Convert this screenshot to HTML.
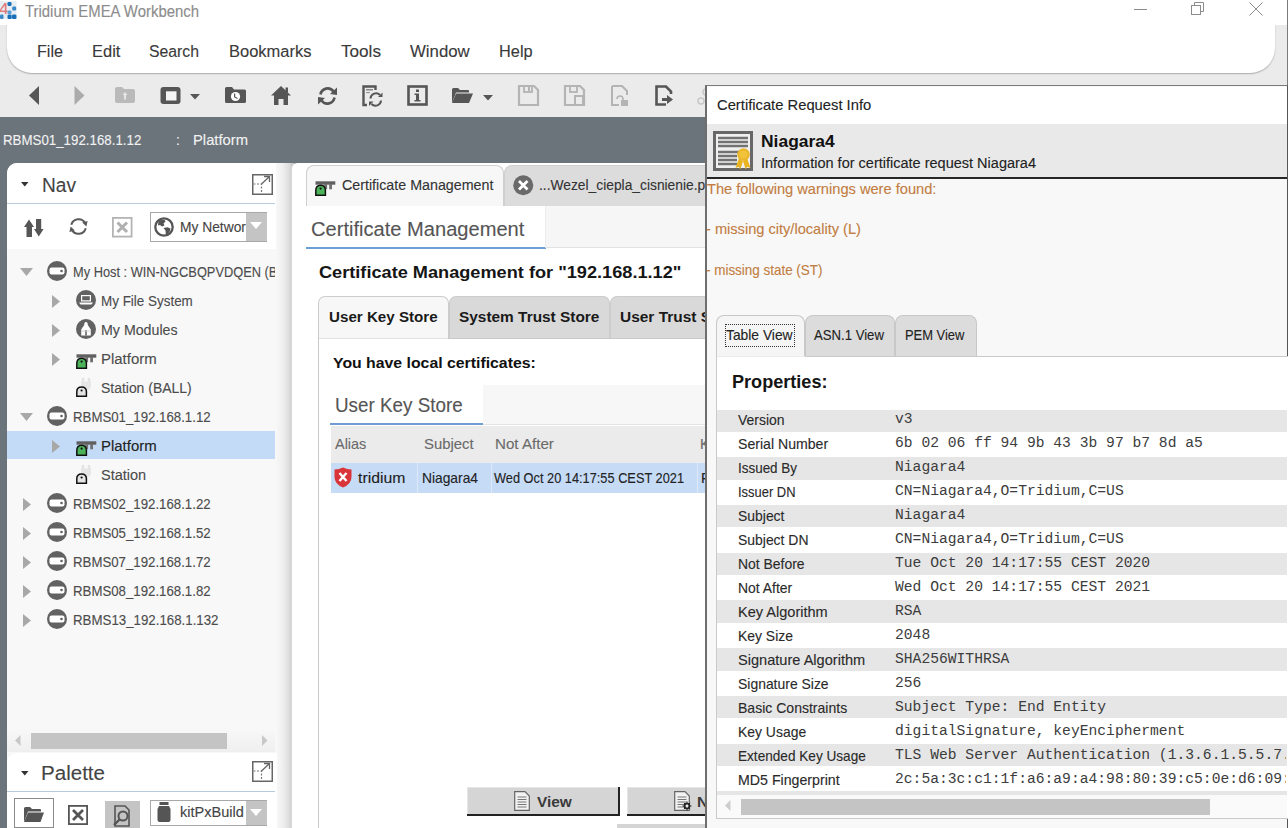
<!DOCTYPE html>
<html><head><meta charset="utf-8"><title>Tridium EMEA Workbench</title>
<style>
*{margin:0;padding:0;box-sizing:border-box}
html,body{width:1288px;height:828px;overflow:hidden}
body{position:relative;background:#6b737b;font-family:"Liberation Sans",sans-serif}
.a{position:absolute}
.tx{position:absolute;white-space:nowrap;line-height:1}
svg{position:absolute;overflow:visible}
</style></head><body>
<div class="a" style="left:0px;top:0px;width:1288px;height:117px;background:#ebebeb"></div>
<div class="a" style="left:7px;top:20px;width:1268px;height:53px;background:#fff;border-radius:0 0 25px 25px;box-shadow:0 1px 1.5px rgba(0,0,0,.28)"></div>
<div class="a" style="left:0px;top:0px;width:1288px;height:25px;background:#fff"></div>
<svg style="left:0px;top:1px" width="17" height="18" viewBox="0 0 17 18">
<rect x="0" y="0" width="16.5" height="18" fill="#e6eef4"/>
<path d="M-1 10 L4.5 2 L6.5 2 L6.5 9.5 L7.5 9.5 L7.5 11 L6.5 11 L6.5 13 L4.8 13 L4.8 11 L-1 11 Z M0.8 9.5 L4.8 9.5 L4.8 4.5 Z" fill="#e07c7c"/>
<rect x="7.5" y="1" width="4" height="4" rx="1.2" fill="#1a70b8"/>
<rect x="12.2" y="5.5" width="4" height="4" rx="1.2" fill="#3a88c8"/>
<rect x="7.5" y="9.5" width="4" height="3.5" rx="1.2" fill="#5a9ed6"/>
<rect x="7.5" y="13.5" width="4.2" height="4.5" rx="1.2" fill="#1a70b8"/>
<rect x="12" y="13.5" width="4.5" height="4.5" rx="1.2" fill="#1a70b8"/>
<rect x="0" y="13.5" width="3.5" height="4.5" rx="1.2" fill="#3a88c8"/>
</svg>
<div class="a" style="left:1134px;top:9px;width:13px;height:1px;background:#8a8a8a"></div>
<svg style="left:1190px;top:1px" width="16" height="16" viewBox="0 0 16 16"><rect x="1.5" y="4.5" width="9" height="9" fill="none" stroke="#8c8c8c" stroke-width="1"/><path d="M4.5 4.5 V1.5 H13.5 V10.5 H10.5" fill="none" stroke="#8c8c8c" stroke-width="1"/></svg>
<svg style="left:1248px;top:1px" width="16" height="16" viewBox="0 0 16 16"><path d="M1.5 1.5 L14.5 14.5 M14.5 1.5 L1.5 14.5" stroke="#8c8c8c" stroke-width="1"/></svg>
<svg style="left:29px;top:86px" width="11" height="19" viewBox="0 0 11 19"><path d="M10 0 L0 9.5 L10 19 Z" fill="#565656"/></svg>
<svg style="left:74px;top:86px" width="11" height="19" viewBox="0 0 11 19"><path d="M0.5 0 L10.5 9.5 L0.5 19 Z" fill="#ababab"/></svg>
<svg style="left:115px;top:87px" width="20" height="16" viewBox="0 0 20 16"><path d="M0 2 Q0 0 2 0 H7 L9 2 H18 Q20 2 20 4 V14 Q20 16 18 16 H2 Q0 16 0 14 Z" fill="#bababa"/><path d="M10 5 L7.5 8 H9 V12.5 H11 V8 H12.5 Z" fill="#e6e6e6"/></svg>
<svg style="left:160px;top:87px" width="21" height="17" viewBox="0 0 21 17"><rect x="0.5" y="0" width="20" height="17" rx="3" fill="#565656"/><rect x="6" y="4.3" width="10.5" height="9.2" fill="#f4f4f4"/></svg>
<svg style="left:190px;top:94px" width="10" height="6" viewBox="0 0 10 6"><path d="M0 0 H10 L5 5.5 Z" fill="#565656"/></svg>
<svg style="left:225px;top:87px" width="21" height="16" viewBox="0 0 21 16"><path d="M0 1.5 Q0 0 1.5 0 H7 L9 2.5 H19.5 Q21 2.5 21 4 V14.5 Q21 16 19.5 16 H1.5 Q0 16 0 14.5 Z" fill="#565656"/><circle cx="10.5" cy="9.5" r="4.6" fill="#fff"/><path d="M9.6 6.5 V10 L12.5 11.5" stroke="#565656" stroke-width="1.2" fill="none"/></svg>
<svg style="left:271px;top:86px" width="20" height="19" viewBox="0 0 20 19"><path d="M10 0 L20 9.5 H17 V19 H12.5 V13 H7.5 V19 H3 V9.5 H0 Z" fill="#565656"/><rect x="14.5" y="1.5" width="2.5" height="5" fill="#565656"/></svg>
<svg style="left:317px;top:86px" width="21" height="20" viewBox="0 0 21 20"><path d="M3.5 8.5 A7.2 7.2 0 0 1 16.5 5.5" fill="none" stroke="#565656" stroke-width="2.6"/><path d="M20 1.5 L20 9 L13 8 Z" fill="#565656"/><path d="M17.5 11.5 A7.2 7.2 0 0 1 4.5 14.5" fill="none" stroke="#565656" stroke-width="2.6"/><path d="M1 18.5 L1 11 L8 12 Z" fill="#565656"/></svg>
<svg style="left:362px;top:85px" width="21" height="21" viewBox="0 0 21 21"><path d="M5 20 H1.5 V1.5 H13.5 V5" fill="none" stroke="#565656" stroke-width="2.4"/><rect x="4" y="4" width="7" height="1.5" fill="#888"/><rect x="4" y="7" width="4" height="1.2" fill="#999"/><path d="M8.5 13.5 A5.5 5.5 0 0 1 18 10" fill="none" stroke="#565656" stroke-width="2"/><path d="M20.5 7.5 V12 H16 Z" fill="#565656"/><path d="M19 15.5 A5.5 5.5 0 0 1 9.5 19" fill="none" stroke="#565656" stroke-width="2"/><path d="M7 21 V16.5 H11.5 Z" fill="#565656"/></svg>
<svg style="left:407px;top:85px" width="21" height="21" viewBox="0 0 21 21"><rect x="1.5" y="1.5" width="18" height="18" fill="none" stroke="#565656" stroke-width="2.6"/><rect x="9" y="4.5" width="3" height="2.5" fill="#565656"/><path d="M7.5 8.5 H12 V15 H13.5 V16.5 H7.5 V15 H9 V10 H7.5 Z" fill="#565656"/></svg>
<svg style="left:452px;top:88px" width="21" height="15" viewBox="0 0 21 15"><path d="M0 1.5 Q0 0 1.5 0 H6 L8 2 H16 Q17 2 17 3 V4.5 H4 L0 15 Z" fill="#565656"/><path d="M4 5.5 H21 L17 15 H0 Z" fill="#565656"/></svg>
<svg style="left:483px;top:95px" width="10" height="6" viewBox="0 0 10 6"><path d="M0 0 H10 L5 5.5 Z" fill="#565656"/></svg>
<svg style="left:518px;top:85px" width="21" height="21" viewBox="0 0 21 21"><path d="M1 1 H16 L20 5 V20 H1 Z" fill="none" stroke="#b4b4b4" stroke-width="2.2"/><rect x="6" y="1" width="8" height="6" fill="none" stroke="#b4b4b4" stroke-width="1.8"/><rect x="10" y="2" width="2" height="4" fill="#b4b4b4"/></svg>
<svg style="left:564px;top:85px" width="21" height="21" viewBox="0 0 21 21"><path d="M1 1 H16 L20 5 V20 H1 Z" fill="none" stroke="#b4b4b4" stroke-width="2.2"/><rect x="6" y="1" width="7" height="6" fill="none" stroke="#b4b4b4" stroke-width="1.8"/><rect x="11" y="11" width="8" height="9" fill="none" stroke="#b4b4b4" stroke-width="2"/></svg>
<svg style="left:611px;top:85px" width="18" height="21" viewBox="0 0 18 21"><path d="M1 1 H11 L16 6 V10" fill="none" stroke="#b4b4b4" stroke-width="2"/><path d="M1 1 V20 H8" fill="none" stroke="#b4b4b4" stroke-width="2"/><path d="M6 14 A3 3 0 0 1 12 14 V16" fill="none" stroke="#b4b4b4" stroke-width="1.6"/><rect x="10" y="15" width="7" height="6" fill="#b4b4b4"/></svg>
<svg style="left:655px;top:85px" width="19" height="21" viewBox="0 0 19 21"><path d="M11 19.5 H1.5 V1.5 H11 L16 6.5 V9" fill="none" stroke="#565656" stroke-width="2.6"/><path d="M7 13 H12 V10 L18 14.5 L12 19 V16 H7 Z" fill="#565656"/></svg>
<svg style="left:697px;top:88px" width="12" height="18" viewBox="0 0 12 18"><circle cx="4" cy="13" r="3" fill="none" stroke="#c8c8c8" stroke-width="1.5"/><circle cx="9" cy="4" r="3" fill="none" stroke="#c8c8c8" stroke-width="1.5"/></svg>
<div class="a" style="left:7px;top:163px;width:270px;height:665px;background:#f8f8f8;border-radius:10px 0 0 0"></div>
<div class="a" style="left:7px;top:163px;width:270px;height:41px;background:#fff;border-radius:10px 0 0 0"></div>
<div class="a" style="left:7px;top:203px;width:268px;height:1px;background:#b8cadc"></div>
<div class="a" style="left:7px;top:204px;width:270px;height:45px;background:#fff"></div>
<div class="a" style="left:276px;top:163px;width:18px;height:665px;background:linear-gradient(to right,#f8f8f8 0%,#f0f0f0 35%,#dcdcdc 75%,#c9c9c9 88%,#c9c9c9 100%)"></div>
<svg style="left:21px;top:182px" width="8" height="5" viewBox="0 0 8 5"><path d="M0 0 H7.5 L3.75 4.5 Z" fill="#333"/></svg>
<svg style="left:252px;top:174px" width="21" height="21" viewBox="0 0 21 21"><rect x="0.75" y="0.75" width="19.5" height="19.5" fill="#fff" stroke="#666" stroke-width="1.5"/><path d="M1.5 10 H9.5 V19.5" fill="none" stroke="#777" stroke-width="1.2" stroke-dasharray="2 1.5"/><path d="M9.5 10 L17.5 2.5 M12 2.5 H17.5 V8" fill="none" stroke="#666" stroke-width="1.3"/></svg>
<svg style="left:24px;top:219px" width="20" height="18" viewBox="0 0 20 18"><path d="M5 0.5 L10 8 H8 V18 H2.5 V8 H0 Z" fill="#565656"/><path d="M14.8 17.5 L19.6 10 H17.2 V0 H12 V10 H10 Z" fill="#565656"/></svg>
<svg style="left:69px;top:217px" width="19" height="19" viewBox="0 0 19 19"><path d="M2.3 7.8 A7.5 7.5 0 0 1 16.2 6.2" fill="none" stroke="#5a5a5a" stroke-width="2"/><path d="M13.2 5.6 L18.6 4 L17.4 9.6 Z" fill="#5a5a5a"/><path d="M16.7 11.2 A7.5 7.5 0 0 1 2.8 12.8" fill="none" stroke="#5a5a5a" stroke-width="2"/><path d="M5.8 13.4 L0.4 15 L1.6 9.4 Z" fill="#5a5a5a"/></svg>
<svg style="left:112px;top:217px" width="21" height="21" viewBox="0 0 21 21"><rect x="0.9" y="0.9" width="18.7" height="18.7" fill="none" stroke="#b4b4b4" stroke-width="1.8"/><path d="M5.5 5.5 L15 15 M15 5.5 L5.5 15" stroke="#b0b0b0" stroke-width="3"/></svg>
<div class="a" style="left:150px;top:212px;width:117px;height:30px;background:#fff;border:1px solid #a8a8a8"></div>
<div class="a" style="left:246px;top:213px;width:20.5px;height:28px;background:#c4c4c4"></div>
<svg style="left:250px;top:222px" width="13" height="8" viewBox="0 0 13 8"><path d="M0 0 H12 L6 7 Z" fill="#fff"/></svg>
<svg style="left:154px;top:217px" width="20" height="20" viewBox="0 0 20 20"><circle cx="10" cy="10" r="8.7" fill="none" stroke="#555" stroke-width="2.3"/><path d="M4.5 4 Q7 2.5 10.5 2.8 L11.5 4.5 L9.5 6.5 L10.5 8.5 L8 9.5 L6 8 L4 8.5 Z" fill="#555"/><path d="M9.5 11 L13.5 10.2 L16.5 11.5 L16 14 L13.5 17.5 L11.8 17.2 L11.5 13.5 Z" fill="#555"/></svg>
<div class="a" style="left:7px;top:431px;width:268px;height:28px;background:#c4dbf7"></div>
<svg style="left:20px;top:268px" width="14" height="9" viewBox="0 0 14 9"><path d="M0 0 H13 L6.5 8 Z" fill="#a8a8a8"/></svg>
<svg style="left:47px;top:261px" width="20" height="20" viewBox="0 0 20 20"><circle cx="10" cy="10" r="10" fill="#626262"/><rect x="2.5" y="6.5" width="15" height="7" rx="2" fill="#fff"/><circle cx="14.5" cy="10" r="1.3" fill="#626262"/></svg>
<svg style="left:52px;top:294.5px" width="9" height="14" viewBox="0 0 9 14"><path d="M0 0 L8 6.5 L0 13 Z" fill="#a8a8a8"/></svg>
<svg style="left:76px;top:290px" width="20" height="20" viewBox="0 0 20 20"><circle cx="10" cy="10" r="10" fill="#626262"/><rect x="5" y="5" width="10" height="6.5" fill="#fff"/><rect x="6.2" y="6.2" width="7.6" height="4.1" fill="#626262"/><path d="M3 12.5 H17 L15.5 14.5 H4.5 Z" fill="#fff"/></svg>
<svg style="left:52px;top:323.5px" width="9" height="14" viewBox="0 0 9 14"><path d="M0 0 L8 6.5 L0 13 Z" fill="#a8a8a8"/></svg>
<svg style="left:76px;top:319px" width="20" height="20" viewBox="0 0 20 20"><circle cx="10" cy="10" r="10" fill="#626262"/><path d="M10 3 Q11.8 3 11.8 6 L14.8 10.5 V16.5 H5.2 V10.5 L8.2 6 Q8.2 3 10 3 Z" fill="#fff"/><rect x="9.2" y="11" width="1.6" height="5.5" fill="#626262"/><rect x="5.2" y="11.5" width="9.6" height="1" fill="#cfcfcf"/></svg>
<svg style="left:52px;top:352.5px" width="9" height="14" viewBox="0 0 9 14"><path d="M0 0 L8 6.5 L0 13 Z" fill="#a8a8a8"/></svg>
<svg style="left:76px;top:353.5px" width="21" height="16" viewBox="0 0 21 16"><rect x="0.5" y="0.3" width="19.8" height="3.4" fill="#606060"/><rect x="9.3" y="3" width="2.8" height="5.3" fill="#707070"/><rect x="14.2" y="3" width="2.8" height="5.3" fill="#707070"/><path d="M0.8 14.3 V9.5 Q0.8 4.2 5.6 4.2 Q10.4 4.2 10.4 9.5 V14.3 Z" fill="#4cb35a" stroke="#111" stroke-width="1.5"/><circle cx="5.6" cy="7.6" r="1.1" fill="#111"/></svg>
<svg style="left:76px;top:377px" width="21" height="20" viewBox="0 0 21 20"><path d="M7 1 V5 M13 1 V5" stroke="#e2e2e2" stroke-width="2.4"/><path d="M5 4.5 H15 V9 Q15 13 10 13 Q5 13 5 9 Z" fill="#e6e6e6"/><rect x="8.5" y="12" width="3" height="4" fill="#e6e6e6"/><path d="M0.8 19.3 V14.8 Q0.8 10 5.6 10 Q10.4 10 10.4 14.8 V19.3 Z" fill="#e4e4e4" stroke="#111" stroke-width="1.5"/><circle cx="5.6" cy="13.5" r="1.1" fill="#111"/></svg>
<svg style="left:20px;top:413px" width="14" height="9" viewBox="0 0 14 9"><path d="M0 0 H13 L6.5 8 Z" fill="#a8a8a8"/></svg>
<svg style="left:47px;top:406px" width="20" height="20" viewBox="0 0 20 20"><circle cx="10" cy="10" r="10" fill="#626262"/><rect x="2.5" y="6.5" width="15" height="7" rx="2" fill="#fff"/><circle cx="14.5" cy="10" r="1.3" fill="#626262"/></svg>
<svg style="left:52px;top:439.5px" width="9" height="14" viewBox="0 0 9 14"><path d="M0 0 L8 6.5 L0 13 Z" fill="#a8a8a8"/></svg>
<svg style="left:76px;top:440.5px" width="21" height="16" viewBox="0 0 21 16"><rect x="0.5" y="0.3" width="19.8" height="3.4" fill="#606060"/><rect x="9.3" y="3" width="2.8" height="5.3" fill="#707070"/><rect x="14.2" y="3" width="2.8" height="5.3" fill="#707070"/><path d="M0.8 14.3 V9.5 Q0.8 4.2 5.6 4.2 Q10.4 4.2 10.4 9.5 V14.3 Z" fill="#4cb35a" stroke="#111" stroke-width="1.5"/><circle cx="5.6" cy="7.6" r="1.1" fill="#111"/></svg>
<svg style="left:76px;top:464px" width="21" height="20" viewBox="0 0 21 20"><path d="M7 1 V5 M13 1 V5" stroke="#e2e2e2" stroke-width="2.4"/><path d="M5 4.5 H15 V9 Q15 13 10 13 Q5 13 5 9 Z" fill="#e6e6e6"/><rect x="8.5" y="12" width="3" height="4" fill="#e6e6e6"/><path d="M0.8 19.3 V14.8 Q0.8 10 5.6 10 Q10.4 10 10.4 14.8 V19.3 Z" fill="#e4e4e4" stroke="#111" stroke-width="1.5"/><circle cx="5.6" cy="13.5" r="1.1" fill="#111"/></svg>
<svg style="left:23px;top:497.5px" width="9" height="14" viewBox="0 0 9 14"><path d="M0 0 L8 6.5 L0 13 Z" fill="#a8a8a8"/></svg>
<svg style="left:47px;top:493px" width="20" height="20" viewBox="0 0 20 20"><circle cx="10" cy="10" r="10" fill="#626262"/><rect x="2.5" y="6.5" width="15" height="7" rx="2" fill="#fff"/><circle cx="14.5" cy="10" r="1.3" fill="#626262"/></svg>
<svg style="left:23px;top:526.5px" width="9" height="14" viewBox="0 0 9 14"><path d="M0 0 L8 6.5 L0 13 Z" fill="#a8a8a8"/></svg>
<svg style="left:47px;top:522px" width="20" height="20" viewBox="0 0 20 20"><circle cx="10" cy="10" r="10" fill="#626262"/><rect x="2.5" y="6.5" width="15" height="7" rx="2" fill="#fff"/><circle cx="14.5" cy="10" r="1.3" fill="#626262"/></svg>
<svg style="left:23px;top:555.5px" width="9" height="14" viewBox="0 0 9 14"><path d="M0 0 L8 6.5 L0 13 Z" fill="#a8a8a8"/></svg>
<svg style="left:47px;top:551px" width="20" height="20" viewBox="0 0 20 20"><circle cx="10" cy="10" r="10" fill="#626262"/><rect x="2.5" y="6.5" width="15" height="7" rx="2" fill="#fff"/><circle cx="14.5" cy="10" r="1.3" fill="#626262"/></svg>
<svg style="left:23px;top:584.5px" width="9" height="14" viewBox="0 0 9 14"><path d="M0 0 L8 6.5 L0 13 Z" fill="#a8a8a8"/></svg>
<svg style="left:47px;top:580px" width="20" height="20" viewBox="0 0 20 20"><circle cx="10" cy="10" r="10" fill="#626262"/><rect x="2.5" y="6.5" width="15" height="7" rx="2" fill="#fff"/><circle cx="14.5" cy="10" r="1.3" fill="#626262"/></svg>
<svg style="left:23px;top:613.5px" width="9" height="14" viewBox="0 0 9 14"><path d="M0 0 L8 6.5 L0 13 Z" fill="#a8a8a8"/></svg>
<svg style="left:47px;top:609px" width="20" height="20" viewBox="0 0 20 20"><circle cx="10" cy="10" r="10" fill="#626262"/><rect x="2.5" y="6.5" width="15" height="7" rx="2" fill="#fff"/><circle cx="14.5" cy="10" r="1.3" fill="#626262"/></svg>
<div class="a" style="left:7px;top:728px;width:268px;height:24px;background:linear-gradient(#f8f8f8,#efefef)"></div>
<div class="a" style="left:31px;top:733px;width:196px;height:16px;background:#c4c4c4"></div>
<svg style="left:15px;top:735px" width="6" height="11" viewBox="0 0 6 11"><path d="M5.5 0 V11 L0 5.5 Z" fill="#c8c8c8"/></svg>
<svg style="left:262px;top:735px" width="6" height="11" viewBox="0 0 6 11"><path d="M0 0 V11 L5.5 5.5 Z" fill="#c8c8c8"/></svg>
<div class="a" style="left:7px;top:753px;width:270px;height:75px;background:#fff;border-radius:10px 0 0 0"></div>
<svg style="left:21px;top:771px" width="8" height="5" viewBox="0 0 8 5"><path d="M0 0 H7.5 L3.75 4.5 Z" fill="#333"/></svg>
<svg style="left:252px;top:761px" width="21" height="21" viewBox="0 0 21 21"><rect x="0.75" y="0.75" width="19.5" height="19.5" fill="#fff" stroke="#666" stroke-width="1.5"/><path d="M1.5 10 H9.5 V19.5" fill="none" stroke="#777" stroke-width="1.2" stroke-dasharray="2 1.5"/><path d="M9.5 10 L17.5 2.5 M12 2.5 H17.5 V8" fill="none" stroke="#666" stroke-width="1.3"/></svg>
<div class="a" style="left:7px;top:791px;width:268px;height:1px;background:#b8cadc"></div>
<div class="a" style="left:14px;top:798px;width:40px;height:30px;border:1px solid #8a8a8a;background:#fff"></div>
<svg style="left:24px;top:807px" width="20" height="15" viewBox="0 0 20 15"><path d="M0 1.5 Q0 0 1.5 0 H6 L8 2 H16 Q17 2 17 3 V4.5 H4 L0 15 Z" fill="#555"/><path d="M4 5.5 H20 L16.5 15 H0 Z" fill="#555"/></svg>
<svg style="left:68px;top:805px" width="20" height="20" viewBox="0 0 20 20"><rect x="0.9" y="0.9" width="18.2" height="18.2" fill="none" stroke="#555" stroke-width="1.8"/><path d="M5 5 L15 15 M15 5 L5 15" stroke="#555" stroke-width="2.8"/></svg>
<div class="a" style="left:105px;top:801px;width:35px;height:27px;background:#c4c4c4"></div>
<svg style="left:113px;top:805px" width="20" height="22" viewBox="0 0 20 22"><path d="M2 21 H16 V5 L12 1 H2 Z" fill="none" stroke="#555" stroke-width="1.6"/><circle cx="10" cy="11" r="4.5" fill="none" stroke="#555" stroke-width="2"/><path d="M6.5 14.5 L1 20" stroke="#555" stroke-width="2.4"/></svg>
<div class="a" style="left:150px;top:800px;width:117px;height:26px;background:#fff;border:1px solid #a8a8a8"></div>
<div class="a" style="left:246px;top:801px;width:20.5px;height:24px;background:#c4c4c4"></div>
<svg style="left:250px;top:809px" width="13" height="8" viewBox="0 0 13 8"><path d="M0 0 H12 L6 7 Z" fill="#fff"/></svg>
<svg style="left:157px;top:802px" width="14" height="20" viewBox="0 0 14 20"><rect x="2.5" y="0" width="9" height="3" fill="#555"/><path d="M2 4 H12 L13.5 7 V18 Q13.5 20 11.5 20 H2.5 Q0.5 20 0.5 18 V7 Z" fill="#555"/></svg>
<div class="a" style="left:291px;top:163px;width:414px;height:665px;background:#fff;border-radius:6px 0 0 0;border-left:1px solid #d8d8d8"></div>
<div class="a" style="left:305.5px;top:165px;width:198.5px;height:41px;background:#f7f7f7;border:1px solid #cfcfcf;border-bottom:none;border-radius:8px 8px 0 0"></div>
<div class="a" style="left:504px;top:165px;width:220px;height:41px;background:#dcdcdc;border:1px solid #cfcfcf;border-bottom:none;border-radius:8px 8px 0 0"></div>
<div class="a" style="left:305.5px;top:206px;width:240px;height:42px;background:#fff"></div>
<div class="a" style="left:545px;top:206px;width:160px;height:41px;background:#f6f6f6;border-left:1px solid #ececec"></div>
<div class="a" style="left:305.5px;top:247px;width:240px;height:2px;background:#6d9fd2"></div>
<div class="a" style="left:545px;top:247px;width:160px;height:1px;background:#e2e2e2"></div>
<svg style="left:315px;top:181px" width="21" height="16" viewBox="0 0 21 16"><rect x="0.5" y="0.3" width="19.8" height="3.4" fill="#606060"/><rect x="9.3" y="3" width="2.8" height="5.3" fill="#707070"/><rect x="14.2" y="3" width="2.8" height="5.3" fill="#707070"/><path d="M0.8 14.3 V9.5 Q0.8 4.2 5.6 4.2 Q10.4 4.2 10.4 9.5 V14.3 Z" fill="#4cb35a" stroke="#111" stroke-width="1.5"/><circle cx="5.6" cy="7.6" r="1.1" fill="#111"/></svg>
<svg style="left:513px;top:175px" width="21" height="21" viewBox="0 0 21 21"><circle cx="10.25" cy="10.25" r="10" fill="#6a6a6a"/><path d="M6 6 L14.5 14.5 M14.5 6 L6 14.5" stroke="#fff" stroke-width="2.8"/></svg>
<div class="a" style="left:318px;top:296px;width:130.5px;height:42px;background:#f7f7f7;border:1px solid #cccccc;border-bottom:none;border-radius:7px 7px 0 0"></div>
<div class="a" style="left:448.5px;top:296px;width:161.5px;height:42px;background:#d9d9d9;border:1px solid #cccccc;border-bottom:none;border-radius:7px 7px 0 0"></div>
<div class="a" style="left:610px;top:296px;width:120px;height:42px;background:#d9d9d9;border:1px solid #cccccc;border-bottom:none;border-radius:7px 7px 0 0"></div>
<div class="a" style="left:318px;top:338px;width:400px;height:500px;border:1px solid #c8c8c8;border-right:none;background:#fff"></div>
<div class="a" style="left:319px;top:338px;width:129px;height:1px;background:#e2e2e2"></div>
<div class="a" style="left:329px;top:385px;width:154px;height:39px;background:#fff"></div>
<div class="a" style="left:483px;top:385px;width:222px;height:40px;background:#f7f7f7"></div>
<div class="a" style="left:329.5px;top:423.3px;width:153.5px;height:1.8px;background:#6f9dd2"></div>
<div class="a" style="left:483px;top:424px;width:222px;height:1px;background:#e4e4e4"></div>
<div class="a" style="left:331px;top:426px;width:374px;height:37px;background:#ebebeb"></div>
<div class="a" style="left:331px;top:463px;width:374px;height:30px;background:#c6dbf6"></div>
<div class="a" style="left:417px;top:463px;width:1.2px;height:30px;background:#dde9f8"></div>
<div class="a" style="left:490.5px;top:463px;width:1.2px;height:30px;background:#dde9f8"></div>
<div class="a" style="left:697px;top:463px;width:1.2px;height:30px;background:#dde9f8"></div>
<svg style="left:334px;top:467px" width="18" height="21" viewBox="0 0 18 21"><path d="M9 0.5 Q13 2.5 17.5 2.5 V10 Q17.5 17 9 20.5 Q0.5 17 0.5 10 V2.5 Q5 2.5 9 0.5 Z" fill="#d9343a"/><path d="M5.5 6 L12.5 14 M12.5 6 L5.5 14" stroke="#fff" stroke-width="2.4"/></svg>
<div class="a" style="left:467px;top:787px;width:153px;height:29px;background:#d5d5d5;border-right:2px solid #222;border-bottom:2px solid #222;box-shadow:inset 1px 1px 0 #e6e6e6"></div>
<div class="a" style="left:626.5px;top:787px;width:90px;height:29px;background:#d5d5d5;border-right:2px solid #222;border-bottom:2px solid #222;box-shadow:inset 1px 1px 0 #e6e6e6"></div>
<div class="a" style="left:616.5px;top:823.5px;width:100px;height:5px;background:#d5d5d5"></div>
<svg style="left:514px;top:791px" width="16" height="20" viewBox="0 0 16 20"><path d="M0.7 0.7 H11 L15.3 5 V19.3 H0.7 Z" fill="#f2f2f2" stroke="#666" stroke-width="1.2"/><path d="M3.5 6 H12.5 M3.5 8.5 H12.5 M3.5 11 H12.5 M3.5 13.5 H12.5 M3.5 16 H12.5" stroke="#777" stroke-width="1"/></svg>
<svg style="left:674px;top:791px" width="16" height="20" viewBox="0 0 16 20"><path d="M0.7 0.7 H11 L15.3 5 V19.3 H0.7 Z" fill="#f2f2f2" stroke="#666" stroke-width="1.2"/><path d="M3.5 6 H12.5 M3.5 8.5 H12.5 M3.5 11 H12.5 M3.5 13.5 H12.5 M3.5 16 H12.5" stroke="#777" stroke-width="1"/></svg>
<svg style="left:682px;top:801px" width="10" height="10" viewBox="0 0 10 10"><circle cx="5" cy="5" r="2.6" fill="none" stroke="#222" stroke-width="1.4"/><path d="M5 0.5 V9.5 M0.5 5 H9.5 M1.8 1.8 L8.2 8.2 M8.2 1.8 L1.8 8.2" stroke="#222" stroke-width="1"/><circle cx="5" cy="5" r="1.2" fill="#eee"/></svg>
<div class="a" style="left:1286.6px;top:0px;width:1.4px;height:90px;background:#7a7a7a"></div>
<div class="a" style="left:705px;top:85px;width:583px;height:743px;background:#f8f8f8;border-left:2px solid #6e6e6e;border-top:1.5px solid #7a7a7a;border-right:1.5px solid #555"></div>
<div class="a" style="left:707px;top:86.5px;width:579.5px;height:37px;background:#fff"></div>
<div class="a" style="left:707px;top:123.5px;width:579.5px;height:54px;background:#e9e9e9"></div>
<div class="a" style="left:707px;top:177px;width:579.5px;height:1.8px;background:#262626"></div>
<svg style="left:713px;top:131px" width="40" height="40" viewBox="0 0 40 40"><rect x="1.5" y="1.5" width="37" height="37" fill="#f0f0f0" stroke="#686868" stroke-width="3"/>
<path d="M5 7 H35 M5 11 H35 M5 15 H35 M5 21 H26 M5 25 H24 M5 29 H24 M5 33 H24" stroke="#727272" stroke-width="2.3"/>
<path d="M26 27 L22.5 37 L25.8 35.8 L27.3 38.5 L30 30 Z M34 27 L37.5 37 L34.2 35.8 L32.7 38.5 L30 30 Z" fill="#e8b520"/>
<circle cx="30.5" cy="23.5" r="6.3" fill="#eab62a"/><circle cx="30.5" cy="23.5" r="4" fill="#f2c23a"/></svg>
<div class="a" style="left:716px;top:315px;width:89px;height:41px;background:#f5f5f5;border:1px solid #c8c8c8;border-bottom:none;border-radius:8px 8px 0 0"></div>
<div class="a" style="left:804.5px;top:315px;width:90.5px;height:41px;background:#dcdcdc;border:1px solid #c8c8c8;border-bottom:none;border-radius:8px 8px 0 0"></div>
<div class="a" style="left:894.5px;top:315px;width:82px;height:41px;background:#dcdcdc;border:1px solid #c8c8c8;border-bottom:none;border-radius:8px 8px 0 0"></div>
<div class="a" style="left:724.5px;top:323.5px;width:70.5px;height:23.5px;border:1px dotted #333"></div>
<div class="a" style="left:716px;top:356px;width:575px;height:463px;background:#fff;border:1px solid #cacaca;border-right:none"></div>
<div class="a" style="left:717px;top:356px;width:88px;height:1px;background:#ebebeb"></div>
<div class="a" style="left:717px;top:409.5px;width:570px;height:22.5px;background:#e6e6e6"></div>
<div class="a" style="left:717px;top:457.24px;width:570px;height:22.5px;background:#e6e6e6"></div>
<div class="a" style="left:717px;top:504.98px;width:570px;height:22.5px;background:#e6e6e6"></div>
<div class="a" style="left:717px;top:552.72px;width:570px;height:22.5px;background:#e6e6e6"></div>
<div class="a" style="left:717px;top:600.46px;width:570px;height:22.5px;background:#e6e6e6"></div>
<div class="a" style="left:717px;top:648.2px;width:570px;height:22.5px;background:#e6e6e6"></div>
<div class="a" style="left:717px;top:695.94px;width:570px;height:22.5px;background:#e6e6e6"></div>
<div class="a" style="left:717px;top:743.6800000000001px;width:570px;height:22.5px;background:#e6e6e6"></div>
<div class="a" style="left:717px;top:791px;width:570px;height:4px;background:#e6e6e6"></div>
<div class="a" style="left:717px;top:795px;width:570px;height:23px;background:#fafafa"></div>
<div class="a" style="left:740.5px;top:798.5px;width:469.5px;height:16px;background:#c4c4c4"></div>
<svg style="left:725px;top:800px" width="6" height="11" viewBox="0 0 6 11"><path d="M5.5 0 V11 L0 5.5 Z" fill="#cdcdcd"/></svg>
<div class="tx" id="t0" style="left:24.80px;top:3.54px;font-size:15.66px;color:#8c8c8c;font-weight:400;font-family:'Liberation Sans', sans-serif;-webkit-text-stroke:0.12px currentColor;transform-origin:0 0;transform:scaleX(0.9523);">Tridium EMEA Workbench</div>
<div class="tx" id="t1" style="left:37.00px;top:43.30px;font-size:16.42px;color:#3a3a3a;font-weight:400;font-family:'Liberation Sans', sans-serif;-webkit-text-stroke:0.12px currentColor;transform-origin:0 0;transform:scaleX(0.9835);">File</div>
<div class="tx" id="t2" style="left:91.60px;top:43.30px;font-size:16.42px;color:#3a3a3a;font-weight:400;font-family:'Liberation Sans', sans-serif;-webkit-text-stroke:0.12px currentColor;transform-origin:0 0;transform:scaleX(1.0042);">Edit</div>
<div class="tx" id="t3" style="left:149.40px;top:43.30px;font-size:16.42px;color:#3a3a3a;font-weight:400;font-family:'Liberation Sans', sans-serif;-webkit-text-stroke:0.12px currentColor;transform-origin:0 0;transform:scaleX(0.9618);">Search</div>
<div class="tx" id="t4" style="left:229.30px;top:43.30px;font-size:16.42px;color:#3a3a3a;font-weight:400;font-family:'Liberation Sans', sans-serif;-webkit-text-stroke:0.12px currentColor;transform-origin:0 0;transform:scaleX(1.0053);">Bookmarks</div>
<div class="tx" id="t5" style="left:341.00px;top:43.30px;font-size:16.42px;color:#3a3a3a;font-weight:400;font-family:'Liberation Sans', sans-serif;-webkit-text-stroke:0.12px currentColor;transform-origin:0 0;transform:scaleX(1.0440);">Tools</div>
<div class="tx" id="t6" style="left:410.00px;top:43.30px;font-size:16.42px;color:#3a3a3a;font-weight:400;font-family:'Liberation Sans', sans-serif;-webkit-text-stroke:0.12px currentColor;transform-origin:0 0;transform:scaleX(1.0230);">Window</div>
<div class="tx" id="t7" style="left:499.00px;top:43.30px;font-size:16.42px;color:#3a3a3a;font-weight:400;font-family:'Liberation Sans', sans-serif;-webkit-text-stroke:0.12px currentColor;transform-origin:0 0;transform:scaleX(0.9956);">Help</div>
<div class="tx" id="t8" style="left:3.00px;top:132.78px;font-size:14.9px;color:#f2f2f2;font-weight:400;font-family:'Liberation Sans', sans-serif;-webkit-text-stroke:0.12px currentColor;transform-origin:0 0;transform:scaleX(0.8933);">RBMS01_192.168.1.12</div>
<div class="tx" id="t9" style="left:176.00px;top:132.78px;font-size:14.9px;color:#f2f2f2;font-weight:400;font-family:'Liberation Sans', sans-serif;-webkit-text-stroke:0.12px currentColor;transform-origin:0 0;transform:scaleX(0.9426);">:</div>
<div class="tx" id="t10" style="left:192.80px;top:132.78px;font-size:14.9px;color:#f2f2f2;font-weight:400;font-family:'Liberation Sans', sans-serif;-webkit-text-stroke:0.12px currentColor;transform-origin:0 0;transform:scaleX(0.9918);">Platform</div>
<div class="tx" id="t11" style="left:41.70px;top:174.93px;font-size:20.52px;color:#444;font-weight:400;font-family:'Liberation Sans', sans-serif;-webkit-text-stroke:0.12px currentColor;transform-origin:0 0;transform:scaleX(0.9319);">Nav</div>
<div class="tx" style="left:179.60px;top:220.06px;font-size:14.58px;color:#444;font-weight:400;font-family:'Liberation Sans', sans-serif;-webkit-text-stroke:0.12px currentColor;width:66.40px;overflow:hidden;height:19.0px"><span id="t12" style="display:inline-block;transform-origin:0 0;transform:scaleX(0.9467);">My Network</span></div>
<div class="tx" style="left:72.80px;top:265.06px;font-size:14.58px;color:#4c4c4c;font-weight:400;font-family:'Liberation Sans', sans-serif;-webkit-text-stroke:0.12px currentColor;width:202.20px;overflow:hidden;height:19.0px"><span id="t13" style="display:inline-block;transform-origin:0 0;transform:scaleX(0.8792);">My Host : WIN-NGCBQPVDQEN (BALL)</span></div>
<div class="tx" style="left:101.40px;top:294.06px;font-size:14.58px;color:#4c4c4c;font-weight:400;font-family:'Liberation Sans', sans-serif;-webkit-text-stroke:0.12px currentColor;width:173.60px;overflow:hidden;height:19.0px"><span id="t14" style="display:inline-block;transform-origin:0 0;transform:scaleX(0.9213);">My File System</span></div>
<div class="tx" style="left:101.40px;top:323.06px;font-size:14.58px;color:#4c4c4c;font-weight:400;font-family:'Liberation Sans', sans-serif;-webkit-text-stroke:0.12px currentColor;width:173.60px;overflow:hidden;height:19.0px"><span id="t15" style="display:inline-block;transform-origin:0 0;transform:scaleX(0.9746);">My Modules</span></div>
<div class="tx" style="left:101.40px;top:352.06px;font-size:14.58px;color:#4c4c4c;font-weight:400;font-family:'Liberation Sans', sans-serif;-webkit-text-stroke:0.12px currentColor;width:173.60px;overflow:hidden;height:19.0px"><span id="t16" style="display:inline-block;transform-origin:0 0;transform:scaleX(1.0243);">Platform</span></div>
<div class="tx" style="left:101.40px;top:381.06px;font-size:14.58px;color:#4c4c4c;font-weight:400;font-family:'Liberation Sans', sans-serif;-webkit-text-stroke:0.12px currentColor;width:173.60px;overflow:hidden;height:19.0px"><span id="t17" style="display:inline-block;transform-origin:0 0;transform:scaleX(0.9556);">Station (BALL)</span></div>
<div class="tx" style="left:72.80px;top:410.06px;font-size:14.58px;color:#4c4c4c;font-weight:400;font-family:'Liberation Sans', sans-serif;-webkit-text-stroke:0.12px currentColor;width:202.20px;overflow:hidden;height:19.0px"><span id="t18" style="display:inline-block;transform-origin:0 0;transform:scaleX(0.9079);">RBMS01_192.168.1.12</span></div>
<div class="tx" style="left:101.40px;top:439.06px;font-size:14.58px;color:#222;font-weight:400;font-family:'Liberation Sans', sans-serif;-webkit-text-stroke:0.12px currentColor;width:173.60px;overflow:hidden;height:19.0px"><span id="t19" style="display:inline-block;transform-origin:0 0;transform:scaleX(1.0243);">Platform</span></div>
<div class="tx" style="left:101.40px;top:468.06px;font-size:14.58px;color:#4c4c4c;font-weight:400;font-family:'Liberation Sans', sans-serif;-webkit-text-stroke:0.12px currentColor;width:173.60px;overflow:hidden;height:19.0px"><span id="t20" style="display:inline-block;transform-origin:0 0;transform:scaleX(0.9958);">Station</span></div>
<div class="tx" style="left:72.80px;top:497.06px;font-size:14.58px;color:#4c4c4c;font-weight:400;font-family:'Liberation Sans', sans-serif;-webkit-text-stroke:0.12px currentColor;width:202.20px;overflow:hidden;height:19.0px"><span id="t21" style="display:inline-block;transform-origin:0 0;transform:scaleX(0.9079);">RBMS02_192.168.1.22</span></div>
<div class="tx" style="left:72.80px;top:526.06px;font-size:14.58px;color:#4c4c4c;font-weight:400;font-family:'Liberation Sans', sans-serif;-webkit-text-stroke:0.12px currentColor;width:202.20px;overflow:hidden;height:19.0px"><span id="t22" style="display:inline-block;transform-origin:0 0;transform:scaleX(0.9079);">RBMS05_192.168.1.52</span></div>
<div class="tx" style="left:72.80px;top:555.06px;font-size:14.58px;color:#4c4c4c;font-weight:400;font-family:'Liberation Sans', sans-serif;-webkit-text-stroke:0.12px currentColor;width:202.20px;overflow:hidden;height:19.0px"><span id="t23" style="display:inline-block;transform-origin:0 0;transform:scaleX(0.9079);">RBMS07_192.168.1.72</span></div>
<div class="tx" style="left:72.80px;top:584.06px;font-size:14.58px;color:#4c4c4c;font-weight:400;font-family:'Liberation Sans', sans-serif;-webkit-text-stroke:0.12px currentColor;width:202.20px;overflow:hidden;height:19.0px"><span id="t24" style="display:inline-block;transform-origin:0 0;transform:scaleX(0.9079);">RBMS08_192.168.1.82</span></div>
<div class="tx" style="left:72.80px;top:613.06px;font-size:14.58px;color:#4c4c4c;font-weight:400;font-family:'Liberation Sans', sans-serif;-webkit-text-stroke:0.12px currentColor;width:202.20px;overflow:hidden;height:19.0px"><span id="t25" style="display:inline-block;transform-origin:0 0;transform:scaleX(0.9112);">RBMS13_192.168.1.132</span></div>
<div class="tx" id="t26" style="left:41.00px;top:763.13px;font-size:20.52px;color:#444;font-weight:400;font-family:'Liberation Sans', sans-serif;-webkit-text-stroke:0.12px currentColor;transform-origin:0 0;transform:scaleX(1.0020);">Palette</div>
<div class="tx" id="t27" style="left:179.80px;top:805.46px;font-size:14.58px;color:#444;font-weight:400;font-family:'Liberation Sans', sans-serif;-webkit-text-stroke:0.12px currentColor;transform-origin:0 0;transform:scaleX(0.9966);">kitPxBuild</div>
<div class="tx" id="t28" style="left:341.80px;top:177.86px;font-size:14.58px;color:#333;font-weight:400;font-family:'Liberation Sans', sans-serif;-webkit-text-stroke:0.12px currentColor;transform-origin:0 0;transform:scaleX(0.9783);">Certificate Management</div>
<div class="tx" style="left:539.20px;top:177.86px;font-size:14.58px;color:#333;font-weight:400;font-family:'Liberation Sans', sans-serif;-webkit-text-stroke:0.12px currentColor;width:165.80px;overflow:hidden;height:19.0px"><span id="t29" style="display:inline-block;transform-origin:0 0;transform:scaleX(0.9467);">...Wezel_ciepla_cisnienie.px</span></div>
<div class="tx" id="t30" style="left:311.10px;top:217.87px;font-size:21.06px;color:#555;font-weight:400;font-family:'Liberation Sans', sans-serif;-webkit-text-stroke:0.12px currentColor;transform-origin:0 0;transform:scaleX(0.9550);">Certificate Management</div>
<div class="tx" id="t31" style="left:318.60px;top:264.47px;font-size:17.28px;color:#151515;font-weight:700;font-family:'Liberation Sans', sans-serif;transform-origin:0 0;transform:scaleX(1.0518);">Certificate Management for &quot;192.168.1.12&quot;</div>
<div class="tx" id="t32" style="left:328.70px;top:309.30px;font-size:15.12px;color:#1a1a1a;font-weight:700;font-family:'Liberation Sans', sans-serif;transform-origin:0 0;transform:scaleX(1.0033);">User Key Store</div>
<div class="tx" id="t33" style="left:458.90px;top:309.30px;font-size:15.12px;color:#1a1a1a;font-weight:700;font-family:'Liberation Sans', sans-serif;transform-origin:0 0;transform:scaleX(1.0195);">System Trust Store</div>
<div class="tx" style="left:620.30px;top:309.30px;font-size:15.12px;color:#1a1a1a;font-weight:700;font-family:'Liberation Sans', sans-serif;width:84.70px;overflow:hidden;height:19.7px"><span id="t34" style="display:inline-block;transform-origin:0 0;transform:scaleX(1.0220);">User Trust Store</span></div>
<div class="tx" id="t35" style="left:333.30px;top:354.90px;font-size:15.12px;color:#111;font-weight:700;font-family:'Liberation Sans', sans-serif;transform-origin:0 0;transform:scaleX(1.0470);">You have local certificates:</div>
<div class="tx" id="t36" style="left:335.10px;top:393.77px;font-size:21.06px;color:#555;font-weight:400;font-family:'Liberation Sans', sans-serif;-webkit-text-stroke:0.12px currentColor;transform-origin:0 0;transform:scaleX(0.8948);">User Key Store</div>
<div class="tx" id="t37" style="left:334.70px;top:435.70px;font-size:15.12px;color:#6a6a6a;font-weight:400;font-family:'Liberation Sans', sans-serif;-webkit-text-stroke:0.12px currentColor;transform-origin:0 0;transform:scaleX(0.9557);">Alias</div>
<div class="tx" id="t38" style="left:423.60px;top:435.70px;font-size:15.12px;color:#6a6a6a;font-weight:400;font-family:'Liberation Sans', sans-serif;-webkit-text-stroke:0.12px currentColor;transform-origin:0 0;transform:scaleX(0.9840);">Subject</div>
<div class="tx" id="t39" style="left:495.20px;top:435.70px;font-size:15.12px;color:#6a6a6a;font-weight:400;font-family:'Liberation Sans', sans-serif;-webkit-text-stroke:0.12px currentColor;transform-origin:0 0;transform:scaleX(1.0018);">Not After</div>
<div class="tx" style="left:700.00px;top:435.70px;font-size:15.12px;color:#6a6a6a;font-weight:400;font-family:'Liberation Sans', sans-serif;-webkit-text-stroke:0.12px currentColor;width:5.00px;overflow:hidden;height:19.7px"><span id="t40" style="display:inline-block;transform-origin:0 0;transform:scaleX(0.9416);">Key</span></div>
<div class="tx" id="t41" style="left:358.30px;top:469.90px;font-size:15.12px;color:#222;font-weight:400;font-family:'Liberation Sans', sans-serif;-webkit-text-stroke:0.12px currentColor;transform-origin:0 0;transform:scaleX(1.0453);">tridium</div>
<div class="tx" id="t42" style="left:422.00px;top:469.90px;font-size:15.12px;color:#222;font-weight:400;font-family:'Liberation Sans', sans-serif;-webkit-text-stroke:0.12px currentColor;transform-origin:0 0;transform:scaleX(0.9131);">Niagara4</div>
<div class="tx" id="t43" style="left:494.00px;top:469.90px;font-size:15.12px;color:#222;font-weight:400;font-family:'Liberation Sans', sans-serif;-webkit-text-stroke:0.12px currentColor;transform-origin:0 0;transform:scaleX(0.8461);">Wed Oct 20 14:17:55 CEST 2021</div>
<div class="tx" style="left:700.50px;top:469.90px;font-size:15.12px;color:#222;font-weight:400;font-family:'Liberation Sans', sans-serif;-webkit-text-stroke:0.12px currentColor;width:4.50px;overflow:hidden;height:19.7px"><span id="t44" style="display:inline-block;transform-origin:0 0;transform:scaleX(0.9416);">RSA</span></div>
<div class="tx" id="t45" style="left:537.20px;top:793.90px;font-size:15.12px;color:#3a3a3a;font-weight:700;font-family:'Liberation Sans', sans-serif;transform-origin:0 0;transform:scaleX(1.0184);">View</div>
<div class="tx" style="left:697.00px;top:793.90px;font-size:15.12px;color:#3a3a3a;font-weight:700;font-family:'Liberation Sans', sans-serif;width:8.00px;overflow:hidden;height:19.7px"><span id="t46" style="display:inline-block;transform-origin:0 0;transform:scaleX(1.0220);">New</span></div>
<div class="tx" id="t47" style="left:717.40px;top:97.10px;font-size:15.12px;color:#222;font-weight:400;font-family:'Liberation Sans', sans-serif;-webkit-text-stroke:0.12px currentColor;transform-origin:0 0;transform:scaleX(0.9766);">Certificate Request Info</div>
<div class="tx" id="t48" style="left:760.60px;top:133.53px;font-size:16.74px;color:#111;font-weight:700;font-family:'Liberation Sans', sans-serif;transform-origin:0 0;transform:scaleX(1.0424);">Niagara4</div>
<div class="tx" id="t49" style="left:760.60px;top:155.66px;font-size:14.58px;color:#222;font-weight:400;font-family:'Liberation Sans', sans-serif;-webkit-text-stroke:0.12px currentColor;transform-origin:0 0;transform:scaleX(0.9952);">Information for certificate request Niagara4</div>
<div class="tx" id="t50" style="left:706.60px;top:180.70px;font-size:15.12px;color:#c27d42;font-weight:400;font-family:'Liberation Sans', sans-serif;-webkit-text-stroke:0.12px currentColor;transform-origin:0 0;transform:scaleX(0.9685);">The following warnings were found:</div>
<div class="tx" id="t51" style="left:706.20px;top:221.10px;font-size:15.12px;color:#c27d42;font-weight:400;font-family:'Liberation Sans', sans-serif;-webkit-text-stroke:0.12px currentColor;transform-origin:0 0;transform:scaleX(0.9660);">- missing city/locality  (L)</div>
<div class="tx" id="t52" style="left:706.20px;top:261.50px;font-size:15.12px;color:#c27d42;font-weight:400;font-family:'Liberation Sans', sans-serif;-webkit-text-stroke:0.12px currentColor;transform-origin:0 0;transform:scaleX(0.8895);">- missing state (ST)</div>
<div class="tx" id="t53" style="left:726.40px;top:327.30px;font-size:15.12px;color:#222;font-weight:400;font-family:'Liberation Sans', sans-serif;-webkit-text-stroke:0.12px currentColor;transform-origin:0 0;transform:scaleX(0.9149);">Table View</div>
<div class="tx" id="t54" style="left:814.00px;top:327.30px;font-size:15.12px;color:#222;font-weight:400;font-family:'Liberation Sans', sans-serif;-webkit-text-stroke:0.12px currentColor;transform-origin:0 0;transform:scaleX(0.8700);">ASN.1 View</div>
<div class="tx" id="t55" style="left:905.30px;top:327.30px;font-size:15.12px;color:#222;font-weight:400;font-family:'Liberation Sans', sans-serif;-webkit-text-stroke:0.12px currentColor;transform-origin:0 0;transform:scaleX(0.8556);">PEM View</div>
<div class="tx" id="t56" style="left:731.80px;top:372.65px;font-size:18.36px;color:#151515;font-weight:700;font-family:'Liberation Sans', sans-serif;transform-origin:0 0;transform:scaleX(0.9852);">Properties:</div>
<div class="tx" id="t57" style="left:737.50px;top:413.14px;font-size:14.36px;color:#2a2a2a;font-weight:400;font-family:'Liberation Sans', sans-serif;-webkit-text-stroke:0.12px currentColor;transform-origin:0 0;transform:scaleX(0.9727);">Version</div>
<div class="tx" style="left:895.00px;top:412.06px;font-size:14.67px;color:#3c3c3c;font-weight:400;font-family:'Liberation Mono', monospace;width:391.00px;overflow:hidden;height:19.1px"><span id="t58" style="display:inline-block;transform-origin:0 0;">v3</span></div>
<div class="tx" id="t59" style="left:737.50px;top:437.11px;font-size:14.36px;color:#2a2a2a;font-weight:400;font-family:'Liberation Sans', sans-serif;-webkit-text-stroke:0.12px currentColor;transform-origin:0 0;transform:scaleX(0.9817);">Serial Number</div>
<div class="tx" style="left:895.00px;top:436.03px;font-size:14.67px;color:#3c3c3c;font-weight:400;font-family:'Liberation Mono', monospace;width:391.00px;overflow:hidden;height:19.1px"><span id="t60" style="display:inline-block;transform-origin:0 0;">6b 02 06 ff 94 9b 43 3b 97 b7 8d a5</span></div>
<div class="tx" id="t61" style="left:737.50px;top:461.08px;font-size:14.36px;color:#2a2a2a;font-weight:400;font-family:'Liberation Sans', sans-serif;-webkit-text-stroke:0.12px currentColor;transform-origin:0 0;transform:scaleX(0.9356);">Issued By</div>
<div class="tx" style="left:895.00px;top:460.00px;font-size:14.67px;color:#3c3c3c;font-weight:400;font-family:'Liberation Mono', monospace;width:391.00px;overflow:hidden;height:19.1px"><span id="t62" style="display:inline-block;transform-origin:0 0;">Niagara4</span></div>
<div class="tx" id="t63" style="left:737.50px;top:485.05px;font-size:14.36px;color:#2a2a2a;font-weight:400;font-family:'Liberation Sans', sans-serif;-webkit-text-stroke:0.12px currentColor;transform-origin:0 0;transform:scaleX(0.9006);">Issuer DN</div>
<div class="tx" style="left:895.00px;top:483.97px;font-size:14.67px;color:#3c3c3c;font-weight:400;font-family:'Liberation Mono', monospace;width:391.00px;overflow:hidden;height:19.1px"><span id="t64" style="display:inline-block;transform-origin:0 0;">CN=Niagara4,O=Tridium,C=US</span></div>
<div class="tx" id="t65" style="left:737.50px;top:509.02px;font-size:14.36px;color:#2a2a2a;font-weight:400;font-family:'Liberation Sans', sans-serif;-webkit-text-stroke:0.12px currentColor;transform-origin:0 0;transform:scaleX(0.9700);">Subject</div>
<div class="tx" style="left:895.00px;top:507.94px;font-size:14.67px;color:#3c3c3c;font-weight:400;font-family:'Liberation Mono', monospace;width:391.00px;overflow:hidden;height:19.1px"><span id="t66" style="display:inline-block;transform-origin:0 0;">Niagara4</span></div>
<div class="tx" id="t67" style="left:737.50px;top:532.99px;font-size:14.36px;color:#2a2a2a;font-weight:400;font-family:'Liberation Sans', sans-serif;-webkit-text-stroke:0.12px currentColor;transform-origin:0 0;transform:scaleX(0.9700);">Subject DN</div>
<div class="tx" style="left:895.00px;top:531.91px;font-size:14.67px;color:#3c3c3c;font-weight:400;font-family:'Liberation Mono', monospace;width:391.00px;overflow:hidden;height:19.1px"><span id="t68" style="display:inline-block;transform-origin:0 0;">CN=Niagara4,O=Tridium,C=US</span></div>
<div class="tx" id="t69" style="left:737.50px;top:556.96px;font-size:14.36px;color:#2a2a2a;font-weight:400;font-family:'Liberation Sans', sans-serif;-webkit-text-stroke:0.12px currentColor;transform-origin:0 0;transform:scaleX(0.9700);">Not Before</div>
<div class="tx" style="left:895.00px;top:555.88px;font-size:14.67px;color:#3c3c3c;font-weight:400;font-family:'Liberation Mono', monospace;width:391.00px;overflow:hidden;height:19.1px"><span id="t70" style="display:inline-block;transform-origin:0 0;">Tue Oct 20 14:17:55 CEST 2020</span></div>
<div class="tx" id="t71" style="left:737.50px;top:580.93px;font-size:14.36px;color:#2a2a2a;font-weight:400;font-family:'Liberation Sans', sans-serif;-webkit-text-stroke:0.12px currentColor;transform-origin:0 0;transform:scaleX(0.9700);">Not After</div>
<div class="tx" style="left:895.00px;top:579.85px;font-size:14.67px;color:#3c3c3c;font-weight:400;font-family:'Liberation Mono', monospace;width:391.00px;overflow:hidden;height:19.1px"><span id="t72" style="display:inline-block;transform-origin:0 0;">Wed Oct 20 14:17:55 CEST 2021</span></div>
<div class="tx" id="t73" style="left:737.50px;top:604.90px;font-size:14.36px;color:#2a2a2a;font-weight:400;font-family:'Liberation Sans', sans-serif;-webkit-text-stroke:0.12px currentColor;transform-origin:0 0;transform:scaleX(1.0125);">Key Algorithm</div>
<div class="tx" style="left:895.00px;top:603.82px;font-size:14.67px;color:#3c3c3c;font-weight:400;font-family:'Liberation Mono', monospace;width:391.00px;overflow:hidden;height:19.1px"><span id="t74" style="display:inline-block;transform-origin:0 0;">RSA</span></div>
<div class="tx" id="t75" style="left:737.50px;top:628.87px;font-size:14.36px;color:#2a2a2a;font-weight:400;font-family:'Liberation Sans', sans-serif;-webkit-text-stroke:0.12px currentColor;transform-origin:0 0;transform:scaleX(0.9700);">Key Size</div>
<div class="tx" style="left:895.00px;top:627.79px;font-size:14.67px;color:#3c3c3c;font-weight:400;font-family:'Liberation Mono', monospace;width:391.00px;overflow:hidden;height:19.1px"><span id="t76" style="display:inline-block;transform-origin:0 0;">2048</span></div>
<div class="tx" id="t77" style="left:737.50px;top:652.84px;font-size:14.36px;color:#2a2a2a;font-weight:400;font-family:'Liberation Sans', sans-serif;-webkit-text-stroke:0.12px currentColor;transform-origin:0 0;transform:scaleX(1.0149);">Signature Algorithm</div>
<div class="tx" style="left:895.00px;top:651.76px;font-size:14.67px;color:#3c3c3c;font-weight:400;font-family:'Liberation Mono', monospace;width:391.00px;overflow:hidden;height:19.1px"><span id="t78" style="display:inline-block;transform-origin:0 0;">SHA256WITHRSA</span></div>
<div class="tx" id="t79" style="left:737.50px;top:676.81px;font-size:14.36px;color:#2a2a2a;font-weight:400;font-family:'Liberation Sans', sans-serif;-webkit-text-stroke:0.12px currentColor;transform-origin:0 0;transform:scaleX(0.9700);">Signature Size</div>
<div class="tx" style="left:895.00px;top:675.73px;font-size:14.67px;color:#3c3c3c;font-weight:400;font-family:'Liberation Mono', monospace;width:391.00px;overflow:hidden;height:19.1px"><span id="t80" style="display:inline-block;transform-origin:0 0;">256</span></div>
<div class="tx" id="t81" style="left:737.50px;top:700.78px;font-size:14.36px;color:#2a2a2a;font-weight:400;font-family:'Liberation Sans', sans-serif;-webkit-text-stroke:0.12px currentColor;transform-origin:0 0;transform:scaleX(0.9773);">Basic Constraints</div>
<div class="tx" style="left:895.00px;top:699.70px;font-size:14.67px;color:#3c3c3c;font-weight:400;font-family:'Liberation Mono', monospace;width:391.00px;overflow:hidden;height:19.1px"><span id="t82" style="display:inline-block;transform-origin:0 0;">Subject Type: End Entity</span></div>
<div class="tx" id="t83" style="left:737.50px;top:724.75px;font-size:14.36px;color:#2a2a2a;font-weight:400;font-family:'Liberation Sans', sans-serif;-webkit-text-stroke:0.12px currentColor;transform-origin:0 0;transform:scaleX(0.9700);">Key Usage</div>
<div class="tx" style="left:895.00px;top:723.67px;font-size:14.67px;color:#3c3c3c;font-weight:400;font-family:'Liberation Mono', monospace;width:391.00px;overflow:hidden;height:19.1px"><span id="t84" style="display:inline-block;transform-origin:0 0;">digitalSignature, keyEncipherment</span></div>
<div class="tx" id="t85" style="left:737.50px;top:748.72px;font-size:14.36px;color:#2a2a2a;font-weight:400;font-family:'Liberation Sans', sans-serif;-webkit-text-stroke:0.12px currentColor;transform-origin:0 0;transform:scaleX(0.9472);">Extended Key Usage</div>
<div class="tx" style="left:895.00px;top:747.64px;font-size:14.67px;color:#3c3c3c;font-weight:400;font-family:'Liberation Mono', monospace;width:391.00px;overflow:hidden;height:19.1px"><span id="t86" style="display:inline-block;transform-origin:0 0;">TLS Web Server Authentication (1.3.6.1.5.5.7.3.1)</span></div>
<div class="tx" id="t87" style="left:737.50px;top:772.69px;font-size:14.36px;color:#2a2a2a;font-weight:400;font-family:'Liberation Sans', sans-serif;-webkit-text-stroke:0.12px currentColor;transform-origin:0 0;transform:scaleX(0.9878);">MD5 Fingerprint</div>
<div class="tx" style="left:895.00px;top:771.61px;font-size:14.67px;color:#3c3c3c;font-weight:400;font-family:'Liberation Mono', monospace;width:391.00px;overflow:hidden;height:19.1px"><span id="t88" style="display:inline-block;transform-origin:0 0;">2c:5a:3c:c1:1f:a6:a9:a4:98:80:39:c5:0e:d6:09:f1</span></div>
</body></html>
